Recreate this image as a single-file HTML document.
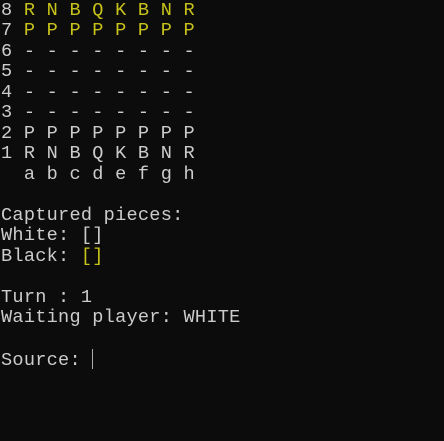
<!DOCTYPE html>
<html><head><style>
html,body{margin:0;padding:0;background:#0c0c0c;width:444px;height:441px;overflow:hidden}
pre{margin:0;position:absolute;left:1px;top:1px;font-family:"Liberation Mono",monospace;font-size:18.6px;line-height:20.47px;color:#cccccc;letter-spacing:0.25px}
.y{color:#c8c31a}
.cur{display:inline-block;width:1px;height:20px;background:#aaa;vertical-align:-4px}
</style></head><body>
<pre>8 <span class="y">R N B Q K B N R</span>
7 <span class="y">P P P P P P P P</span>
6 - - - - - - - -
5 - - - - - - - -
4 - - - - - - - -
3 - - - - - - - -
2 P P P P P P P P
1 R N B Q K B N R
  a b c d e f g h

Captured pieces:
White: []
Black: <span class="y">[]</span>

Turn : 1
Waiting player: WHITE

Source: <span class="cur"></span></pre>
</body></html>
